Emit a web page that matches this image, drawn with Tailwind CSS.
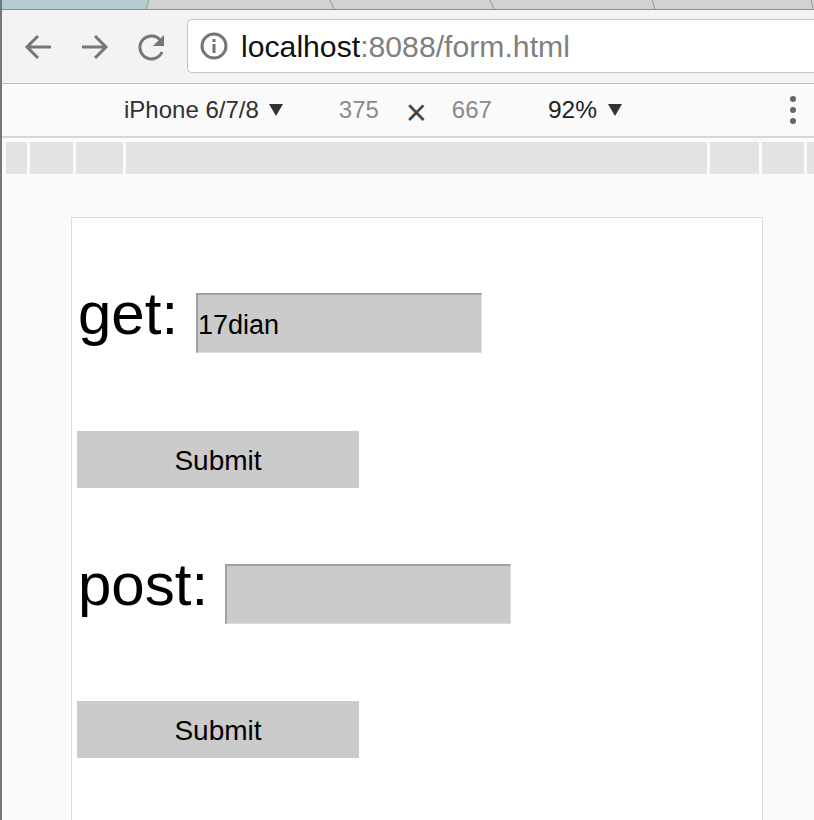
<!DOCTYPE html>
<html lang="en">
<head>
    <meta charset="UTF-8">
    <title>form.html</title>
    <script src="https://cdn.jsdelivr.net/npm/@tailwindcss/browser@4"></script>
</head>
<body class="w-[814px] h-[820px] overflow-hidden bg-[#fafafa] font-['Liberation_Sans',Arial,sans-serif] border-l-2 border-[#6f7a80]">

    <!-- Tab strip -->
    <svg class="block w-[812px] h-[10px]" viewBox="0 0 812 10">
        <rect width="812" height="10" fill="#d2d2d2"/>
        <rect width="146" height="10" fill="#b4cbd0"/>
        <path d="M147 0 144 9M328 0l4 9M488 0l4 9M650 0l3 9M809 0l2 9" stroke="#9a9a9a" fill="none"/>
        <path d="M0 9.500H812" stroke="#8d8d8d"/>
    </svg>

    <!-- Browser toolbar -->
    <div class="h-[74px] flex items-center bg-[#f3f3f3] border-b border-[#bdbdbd]">
        <div class="w-[185px] flex items-center pl-[21px] gap-[27px]">
            <svg class="w-[30px] h-[30px]" viewBox="0 0 30 30" fill="none" stroke="#767676" stroke-width="3"><path d="M28 15H4M15 4 4 15l11 11"/></svg>
            <svg class="w-[30px] h-[30px]" viewBox="0 0 30 30" fill="none" stroke="#767676" stroke-width="3"><path d="M2 15h24M15 4l11 11-11 11"/></svg>
            <svg class="w-[30px] h-[30px]" viewBox="0 0 30 30" fill="none" stroke="#767676" stroke-width="3"><path d="M25 20a11.500 11.500 0 1 1-1-11"/><path d="M27 3v11H16z" fill="#767676" stroke="none"/></svg>
        </div>
        <div class="flex-1 h-[54px] -mt-[1px] flex items-center bg-white border border-r-0 border-[#c4c4c4] rounded-l-[5px] pl-[12px]">
            <svg class="w-[28px] h-[28px] shrink-0" viewBox="0 0 28 28" fill="none"><circle cx="14" cy="14" r="12" stroke="#757575" stroke-width="3"/><rect x="12.500" y="12" width="3" height="9" fill="#757575"/><rect x="12.500" y="7" width="3" height="3" fill="#757575"/></svg>
            <span class="ml-[13px] mt-[2px] text-[30.200px] leading-none text-[#111]">localhost<span class="text-[#808080]">:8088/form.html</span></span>
        </div>
    </div>

    <!-- Device toolbar -->
    <div class="h-[54px] flex items-center bg-[#fafafa] border-b-2 border-[#d6d6d6] text-[24px]">
        <span class="ml-[122px] text-[#303030]">iPhone 6/7/8</span>
        <span class="ml-[10px] w-0 h-0 border-x-[7px] border-x-transparent border-t-[12px] border-t-[#333]"></span>
        <span class="ml-[56px] text-[#8a8a8a]">375</span>
        <span class="ml-[27px] mt-[6px] text-[#444] text-[36px] leading-none">×</span>
        <span class="ml-[25px] text-[#8a8a8a]">667</span>
        <span class="ml-[56px] text-[#222] text-[24.500px]">92%</span>
        <span class="ml-[11px] w-0 h-0 border-x-[7px] border-x-transparent border-t-[12px] border-t-[#333]"></span>
        <div class="ml-auto mr-[18px] flex flex-col gap-[5px]">
            <span class="w-[6px] h-[6px] rounded-full bg-[#666]"></span>
            <span class="w-[6px] h-[6px] rounded-full bg-[#666]"></span>
            <span class="w-[6px] h-[6px] rounded-full bg-[#666]"></span>
        </div>
    </div>

    <!-- Media query ruler -->
    <div class="h-[32px] mt-[4px] ml-[4px] flex bg-[#e3e3e3]">
        <div class="ml-[21px] w-[3px] bg-[#fafafa]"></div>
        <div class="ml-[43px] w-[3px] bg-[#fafafa]"></div>
        <div class="ml-[47px] w-[3px] bg-[#fafafa]"></div>
        <div class="ml-[581px] w-[3px] bg-[#fafafa]"></div>
        <div class="ml-[49px] w-[3px] bg-[#fafafa]"></div>
        <div class="ml-[42px] w-[3px] bg-[#fafafa]"></div>
    </div>

    <!-- Emulated page -->
    <div class="ml-[69px] mt-[43px] w-[692px] h-[603px] bg-white border border-b-0 border-[#dcdcdc] text-black pl-[5px]">
        <div class="h-[135px] pt-[75px] flex items-start">
            <label class="text-[60px] leading-[60px] w-[118px] ml-[1px] -mt-[9px]">get:</label>
            <input type="text" value="17dian" class="w-[286px] h-[60px] bg-[#cbcbcb] border-t-2 border-l-2 border-t-[#a0a0a0] border-l-[#a0a0a0] border-r border-b border-r-[#dcdcdc] border-b-[#dcdcdc] text-[27px] pl-0 pt-[4px] outline-none">
        </div>
        <button class="mt-[78px] block w-[282px] h-[57px] pt-[2px] bg-[#cbcbcb] text-[28px]">Submit</button>
        <div class="h-[136px] mt-[76px] flex items-start">
            <label class="text-[60px] leading-[60px] w-[147px] ml-[1px] -mt-[9px]">post:</label>
            <input type="text" class="w-[286px] h-[60px] bg-[#cbcbcb] border-t-2 border-l-2 border-t-[#a0a0a0] border-l-[#a0a0a0] border-r border-b border-r-[#dcdcdc] border-b-[#dcdcdc] outline-none">
        </div>
        <button class="mt-[1px] block w-[282px] h-[57px] pt-[2px] bg-[#cbcbcb] text-[28px]">Submit</button>
    </div>

</body>
</html>
